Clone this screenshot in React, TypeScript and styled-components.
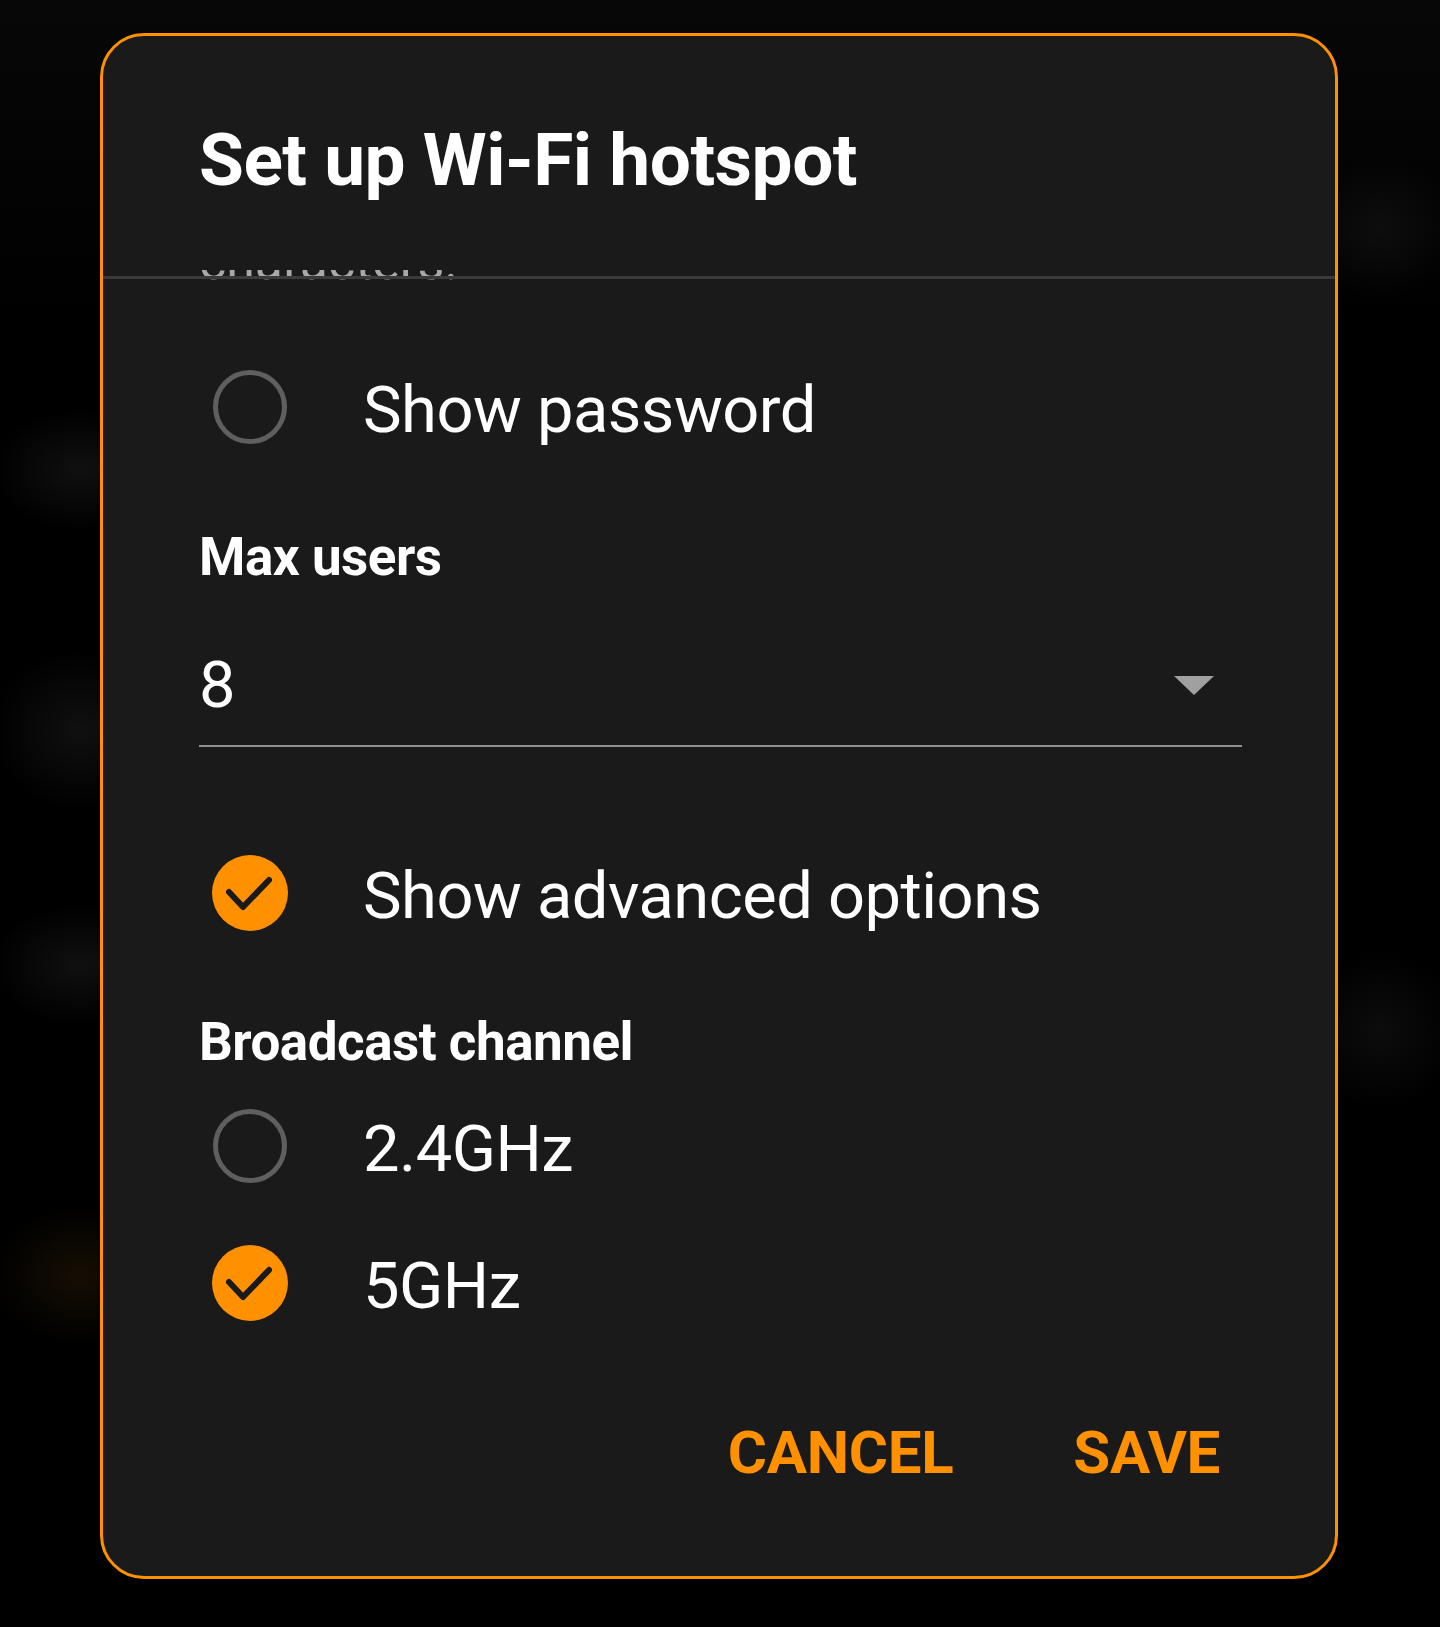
import React from "react";
import styled, { createGlobalStyle } from "styled-components";

const GlobalStyle = createGlobalStyle`
  html, body {
    margin: 0;
    padding: 0;
    background: #000;
  }
  body {
    font-family: Roboto, "Noto Sans", "Liberation Sans", sans-serif;
    -webkit-font-smoothing: antialiased;
  }
`;

const ORANGE = "#ff9000";

const Page = styled.div`
  width: 1440px;
  height: 1627px;
  box-sizing: border-box;
  padding: 33px 0 0 100px;
  background:
    radial-gradient(ellipse 90px 60px at 80px 470px, rgba(40, 40, 40, 0.4), transparent),
    radial-gradient(ellipse 90px 80px at 80px 730px, rgba(40, 40, 40, 0.4), transparent),
    radial-gradient(ellipse 90px 60px at 80px 965px, rgba(40, 40, 40, 0.4), transparent),
    radial-gradient(ellipse 90px 70px at 80px 1275px, rgba(70, 45, 10, 0.3), transparent),
    radial-gradient(ellipse 80px 70px at 1380px 230px, rgba(40, 40, 40, 0.3), transparent),
    radial-gradient(ellipse 80px 80px at 1380px 1030px, rgba(40, 40, 40, 0.3), transparent),
    linear-gradient(#070707, #000 20%, #000);
`;

const Dialog = styled.section`
  width: 1238px;
  height: 1546px;
  box-sizing: border-box;
  border: 3px solid ${ORANGE};
  border-radius: 44px;
  background: #1a1a1a;
  display: flex;
  flex-direction: column;
  overflow: hidden;
  letter-spacing: -0.5px;
`;

const Header = styled.header`
  height: 234px;
  box-sizing: border-box;
  padding: 81px 93px 0 96px;
  flex-shrink: 0;
`;

const Title = styled.h1`
  margin: 0;
  font-size: 73px;
  line-height: 86px;
  font-weight: 700;
  color: #ffffff;
`;

const Body = styled.div`
  position: relative;
  flex: 1;
  overflow: hidden;
  padding: 0 93px 0 96px;
  display: flex;
  flex-direction: column;

  &::before {
    content: "";
    position: absolute;
    left: 0;
    right: 0;
    top: 6px;
    height: 3px;
    background: #3a3a3a;
    z-index: 1;
  }
`;

const HintText = styled.p`
  margin: -38px 0 0;
  font-size: 52px;
  line-height: 60px;
  letter-spacing: 0;
  color: #a8a8a8;
`;

const OptionRow = styled.label<{ $gap: number }>`
  display: flex;
  align-items: center;
  height: 100px;
  margin-top: ${(p) => p.$gap}px;
  cursor: pointer;
`;

const ControlBox = styled.span`
  width: 102px;
  display: flex;
  justify-content: center;
  align-items: center;
  flex-shrink: 0;
`;

const RadioRing = styled.span`
  width: 74px;
  height: 74px;
  box-sizing: border-box;
  border-radius: 50%;
  border: 5px solid #5f5f5f;
`;

const CheckDot = styled.span`
  width: 76px;
  height: 76px;
  border-radius: 50%;
  background: ${ORANGE};
  display: flex;
`;

const OptionText = styled.span`
  margin-left: 62px;
  padding-top: 5px;
  font-size: 65px;
  line-height: 76px;
  color: #ffffff;
`;

const SectionLabel = styled.h2<{ $gap: number }>`
  margin: ${(p) => p.$gap}px 0 0;
  font-size: 53px;
  line-height: 62px;
  font-weight: 700;
  color: #ffffff;
`;

const SelectField = styled.div`
  margin-top: 59px;
  display: flex;
  align-items: center;
  justify-content: space-between;
  padding-bottom: 22px;
  border-bottom: 2px solid #8f8f8f;
`;

const SelectValue = styled.span`
  font-size: 65px;
  line-height: 76px;
  color: #ffffff;
`;

const Caret = styled.span`
  width: 0;
  height: 0;
  margin-right: 28px;
  border-left: 20px solid transparent;
  border-right: 20px solid transparent;
  border-top: 19px solid #a0a0a0;
`;

const Footer = styled.footer`
  flex-shrink: 0;
  display: flex;
  justify-content: flex-end;
  gap: 120px;
  padding: 0 115px 88px 0;
`;

const TextButton = styled.button`
  background: none;
  border: none;
  padding: 0;
  margin: 0;
  font-family: inherit;
  font-size: 60px;
  line-height: 70px;
  font-weight: 700;
  letter-spacing: -0.3px;
  color: ${ORANGE};
  cursor: pointer;
`;

function Check() {
  return (
    <CheckDot>
      <svg width="76" height="76" viewBox="0 0 76 76">
        <polyline
          points="17,37 31,52 57,25"
          fill="none"
          stroke="#1a1a1a"
          strokeWidth="6"
          strokeLinecap="round"
          strokeLinejoin="round"
        />
      </svg>
    </CheckDot>
  );
}

function Option({ checked, label, gap }: { checked: boolean; label: string; gap: number }) {
  return (
    <OptionRow $gap={gap}>
      <ControlBox>{checked ? <Check /> : <RadioRing />}</ControlBox>
      <OptionText>{label}</OptionText>
    </OptionRow>
  );
}

export default function App() {
  return (
    <>
      <GlobalStyle />
      <Page>
        <Dialog>
          <Header>
            <Title>Set up Wi-Fi hotspot</Title>
          </Header>
          <Body>
            <HintText>characters.</HintText>
            <Option checked={false} label="Show password" gap={65} />
            <SectionLabel $gap={69}>Max users</SectionLabel>
            <SelectField>
              <SelectValue>8</SelectValue>
              <Caret />
            </SelectField>
            <Option checked label="Show advanced options" gap={96} />
            <SectionLabel $gap={68}>Broadcast channel</SectionLabel>
            <Option checked={false} label="2.4GHz" gap={23} />
            <Option checked label="5GHz" gap={37} />
          </Body>
          <Footer>
            <TextButton>CANCEL</TextButton>
            <TextButton>SAVE</TextButton>
          </Footer>
        </Dialog>
      </Page>
    </>
  );
}
